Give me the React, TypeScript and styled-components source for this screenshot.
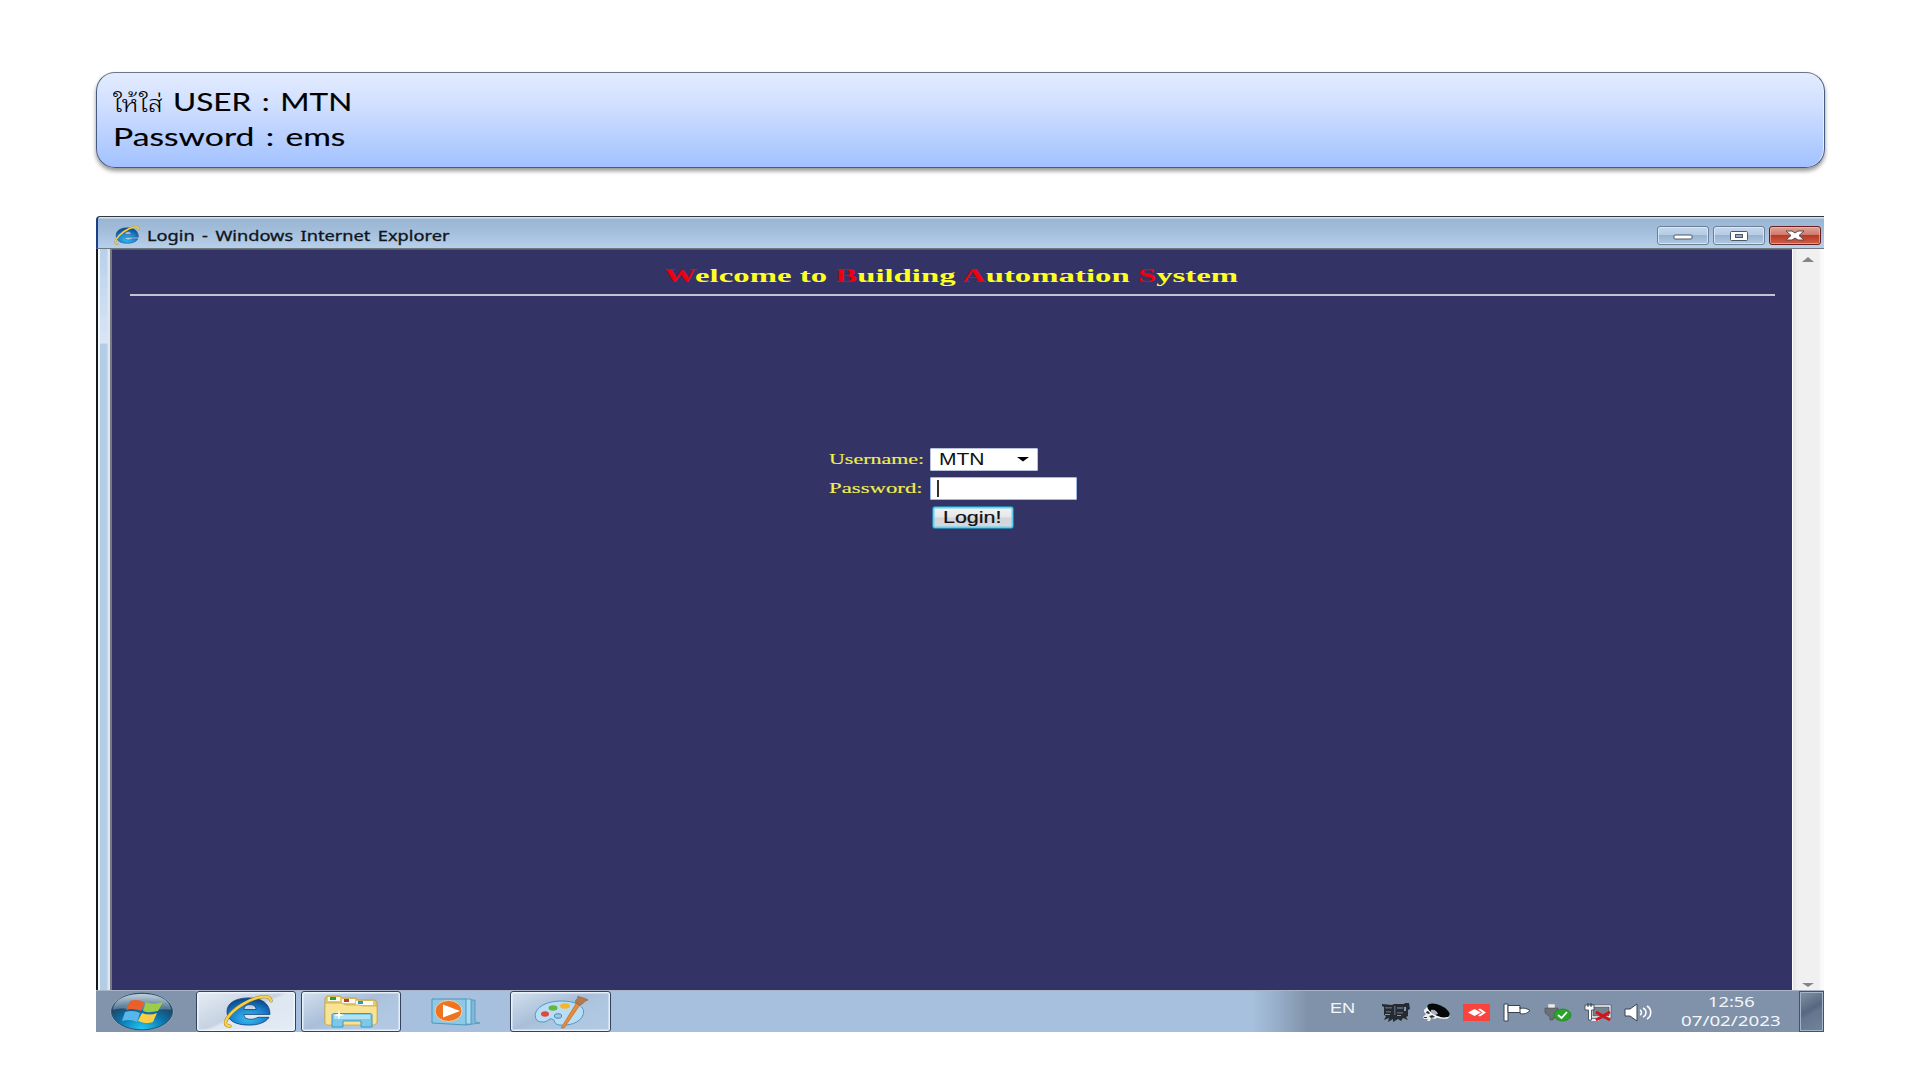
import React, { useLayoutEffect, useRef, useState } from "react";
import styled, { createGlobalStyle } from "styled-components";

const GlobalStyle = createGlobalStyle`
  * {
    box-sizing: border-box;
  }

  body {
    margin: 0;
    background: #ffffff;
    overflow: hidden;
  }

  svg {
    display: block;
    flex: none;
  }
`;

const Slide = styled.main`
  width: 1920px;
  height: 1080px;
  padding: 72px 95px 48px 96px;
  display: flex;
  flex-direction: column;
  gap: 48px;
`;

const FitBox = styled.span<{ $width: number }>`
  display: block;
  flex: none;
  width: ${(p) => p.$width}px;
`;

const FitInner = styled.span`
  display: inline-block;
  vertical-align: top;
  white-space: nowrap;
  transform-origin: 0 50%;
`;

const Banner = styled.section`
  height: 96px;
  padding: 11px 16px 0;
  border: 1px solid #46597f;
  border-top-color: #6c7686;
  border-radius: 19px;
  background: linear-gradient(#e3ecff, #d3e1ff 30%, #a8c5ff 92%, #a3c1ff);
  box-shadow: 0 3px 4px rgba(0, 0, 0, 0.42), inset -1px 0 0 #e6efff;
  font: 25px/35px Lato, "Noto Sans", sans-serif;
  word-spacing: 2px;
  -webkit-text-stroke: 0.15px #000;
  color: #000;
`;

const BannerLine = styled.div`
  height: 35px;
  display: flex;
  gap: 10px;
`;

const Thai = styled.div`
  font: 300 23px/35px "Noto Sans Thai Looped", "Noto Looped Thai", Loma, "Noto Sans Thai",
    "Noto Sans", sans-serif;
  -webkit-text-stroke: 0;
`;

const Desktop = styled.section`
  width: 1728px;
  height: 816px;
  display: flex;
  flex-direction: column;
`;

const TitleBar = styled.header`
  height: 33px;
  padding: 6px 3px 0 16px;
  border-top: 1px solid #33383d;
  border-bottom: 1px solid #6f7880;
  border-left: 2px solid #1b3f87;
  border-top-left-radius: 4px;
  display: flex;
  align-items: center;
  background: linear-gradient(#e3edf7, #9bb6d3 8%, #a3bedb 45%, #b7d0ea);
`;

const TitleText = styled.div`
  margin-left: 7px;
  flex: 1;
  font: 13.5px/20px "Noto Sans", "Open Sans", sans-serif;
  word-spacing: 2px;
  -webkit-text-stroke: 0.3px #10151c;
  color: #10151c;
`;

const WindowButtons = styled.div`
  display: flex;
  gap: 4px;
`;

const WindowButton = styled.button<{ $danger?: boolean }>`
  width: 52px;
  height: 19px;
  padding: 0;
  border: 1px solid ${(p) => (p.$danger ? "#6b1d1d" : "#6b7f98")};
  border-radius: 3px;
  display: flex;
  align-items: center;
  justify-content: center;
  background: ${(p) =>
    p.$danger
      ? "linear-gradient(#dda398, #cf7a6b 46%, #b83a25 50%, #cc5f48)"
      : "linear-gradient(#c5d8ec, #b5cce4 46%, #98b3d0 50%, #b0c9e3)"};
  box-shadow: inset 0 0 0 1px
    ${(p) => (p.$danger ? "rgba(255,190,170,.6)" : "rgba(230,242,255,.7)")};
`;

const WindowBody = styled.div`
  flex: 1;
  display: flex;
`;

const Frame = styled.div`
  width: 16px;
  border-left: 2px solid #15181c;
  border-right: 2px solid #77797c;
  background: linear-gradient(90deg, #f4f9fd 2px, transparent 2px 9px, #dbe7f2 10px),
    linear-gradient(#b9d0ea, #d9e6f5 94px, #b4cde7 95px);
`;

const Page = styled.div`
  flex: 1;
  padding: 16px 17px 0 18px;
  border-top: 1px solid #5a5a70;
  background: #333366;
`;

const Heading = styled.h1`
  margin: 0 0 6px;
  padding-right: 3px;
  height: 22px;
  display: flex;
  justify-content: center;
  font: bold 18px/21px "Liberation Serif", serif;
  color: #ffff22;
`;

const Initial = styled.span`
  color: #ee0011;
`;

const Rule = styled.hr`
  margin: 0;
  height: 2px;
  border: 0;
  background: #c4c3d4;
`;

const Form = styled.form`
  width: 248px;
  margin: 152px auto 0;
  display: flex;
  flex-direction: column;
  gap: 5px;
`;

const Field = styled.div`
  height: 24px;
  display: flex;
`;

const Label = styled.label`
  width: 101px;
  font: 15.5px/22px "Liberation Serif", serif;
  -webkit-text-stroke: 0.15px #f0f04a;
  color: #f0f04a;
`;

const Select = styled.div`
  width: 108px;
  height: 23px;
  padding: 0 8px 0 8px;
  border: 1px solid #b9c2dc;
  border-radius: 1px;
  display: flex;
  align-items: center;
  justify-content: space-between;
  background: #fff;
  font: 16px/22px "Liberation Sans", sans-serif;
  color: #111;
`;

const Input = styled.div`
  width: 147px;
  height: 23px;
  padding: 2px 6px;
  border: 1px solid #9db9e6;
  border-radius: 1px;
  background: #fff;
`;

const Caret = styled.div`
  width: 2px;
  height: 17px;
  background: #333;
`;

const LoginButton = styled.button`
  width: 82px;
  height: 23px;
  margin: 0 0 0 103px;
  padding: 0 0 0 10px;
  border: 1px solid #2a7fa8;
  border-radius: 3px;
  background: linear-gradient(#f4f4f5, #e6e7e9 48%, #d2d4d8 52%, #d6d9dd);
  box-shadow: inset 0 0 0 1.5px #5fd0f3;
  font: 16px/20px "Liberation Sans", sans-serif;
  -webkit-text-stroke: 0.2px #111;
  text-align: left;
  color: #111;
`;

const Scrollbar = styled.div`
  width: 32px;
  padding: 8px 9px 3px 8px;
  border-left: 1px solid #fff;
  display: flex;
  flex-direction: column;
  align-items: center;
  justify-content: space-between;
  background: linear-gradient(90deg, #e3e3e6, #f0f0f0 5px 26px, #fafafa 28px);
`;

const Taskbar = styled.footer`
  height: 42px;
  border-top: 1px solid #a9b4c6;
  display: flex;
  background: linear-gradient(
    90deg,
    #8294ab 100px,
    #a7c0dd 101px 1155px,
    #98afca 1180px,
    #8092a9 1212px
  );
`;

const StartArea = styled.div`
  width: 100px;
  padding: 1px 0 0 14px;
`;

const TaskButton = styled.div<{ $width: number; $bright?: boolean }>`
  width: ${(p) => p.$width}px;
  height: 41px;
  padding-left: ${(p) => (p.$bright ? 3 : 0)}px;
  border: 1px solid #34435b;
  border-radius: 3px;
  display: flex;
  align-items: center;
  justify-content: center;
  background: ${(p) =>
    p.$bright
      ? "linear-gradient(155deg, #e6ecf4, #c6d2e2 48%, #dde6f1 52%, #e4ecf5)"
      : "linear-gradient(155deg, #d4e0ee, #a9bfd9 45%, #aec5e0 60%, #b4cae3)"};
  box-shadow: inset 0 0 0 1.5px rgba(240, 247, 255, 0.85);
`;

const TaskGap = styled.div<{ $width: number }>`
  width: ${(p) => p.$width}px;
  display: flex;
  align-items: center;
  justify-content: center;
`;

const Tray = styled.div`
  margin-left: auto;
  display: flex;
  align-items: center;
`;

const Language = styled.div`
  height: 41px;
  width: 52px;
  padding-top: 7px;
  font: 14.5px/20px "Liberation Sans", sans-serif;
  color: #f2f5f9;
`;

const TrayIcons = styled.div`
  width: 299px;
  padding-top: 1px;
  display: flex;
  gap: 12.4px;
`;

const Clock = styled.div`
  width: 118px;
  height: 41px;
  padding-top: 2px;
  font: 14px/18.5px "Noto Sans", "Open Sans", sans-serif;
  color: #f4f7fa;
`;

const Time = styled.div`
  padding-left: 27px;
`;

const ShowDesktop = styled.div`
  width: 25px;
  height: 41px;
  border: 1px solid #43536a;
  box-shadow: inset 0 0 0 1px #a4b3c6;
  background: linear-gradient(150deg, #8093a8, #56687f 45%, #63768d 55%, #70849c);
`;

interface FitProps {
  width: number;
  children: React.ReactNode;
}

// Stretches a run of text horizontally until it fills the given width
function Fit({ width, children }: FitProps) {
  const ref = useRef<HTMLSpanElement>(null);
  const [scale, setScale] = useState(1);

  useLayoutEffect(() => {
    if (ref.current) setScale(width / ref.current.offsetWidth);
  }, [width]);

  return (
    <FitBox $width={width}>
      <FitInner ref={ref} style={{ transform: `scaleX(${scale})` }}>
        {children}
      </FitInner>
    </FitBox>
  );
}

function IeLogo({ width, height }: { width: number; height: number }) {
  return (
    <svg width={width} height={height} viewBox="0 0 50 34" preserveAspectRatio="none">
      <defs>
        <radialGradient id="ieBlue" cx="50%" cy="75%" r="70%">
          <stop offset="0" stopColor="#35c0f5" />
          <stop offset="0.6" stopColor="#1b7fcb" />
          <stop offset="1" stopColor="#0b4a8e" />
        </radialGradient>
      </defs>
      <path
        fillRule="evenodd"
        fill="url(#ieBlue)"
        stroke="#0d3f78"
        strokeWidth="0.8"
        d="M26 3C39 3 47 9 47 20H21c0 4 3 5 7 5 3 0 5-1 7-2h11c-3 5-10 8-20 8C12 31 4 26 4 17S13 3 26 3ZM21 15h12c0-3-2-5-6-5s-6 2-6 5Z"
      />
      <path
        fill="none"
        stroke="#b98516"
        strokeWidth="3.4"
        strokeLinecap="round"
        d="M7 32C-3 32 5 19 19 10S47-1 48 6"
      />
      <path
        fill="none"
        stroke="#f7d24b"
        strokeWidth="2.3"
        strokeLinecap="round"
        d="M7 32C-3 32 5 19 19 10S47-1 48 6"
      />
    </svg>
  );
}

function StartOrb() {
  return (
    <svg width="64" height="39" viewBox="0 0 64 39">
      <defs>
        <radialGradient id="orb" cx="50%" cy="95%" r="85%">
          <stop offset="0" stopColor="#1fc6f2" />
          <stop offset="0.45" stopColor="#0b77b0" />
          <stop offset="0.8" stopColor="#1d4668" />
          <stop offset="1" stopColor="#4a6b85" />
        </radialGradient>
        <linearGradient id="orbGloss" x1="0" y1="0" x2="0" y2="1">
          <stop offset="0" stopColor="#dce8f0" stopOpacity="0.8" />
          <stop offset="1" stopColor="#a8c0d0" stopOpacity="0.35" />
        </linearGradient>
      </defs>
      <ellipse cx="32" cy="19.5" rx="31.5" ry="19" fill="#9db3c6" />
      <ellipse cx="32" cy="19.5" rx="30.5" ry="18.4" fill="url(#orb)" stroke="#28506e" />
      <path d="M3 18C4 7 16 2 32 2s28 5 29 16c-9-2-17 1-29 0S12 15 3 18Z" fill="url(#orbGloss)" />
      <path d="M20 9c5-2 10-1 14 1l-3 9c-4-2-9-3-15-1Z" fill="#e9602b" />
      <path d="M36 10c5 2 10 2 17 0l-5 9c-5 1-10 2-15 0Z" fill="#9bcc4a" />
      <path d="M15 20c6-2 11-1 15 1l-3 9c-4-2-9-3-15-1Z" fill="#58b7ea" />
      <path d="M32 21c5 2 10 2 15 0l-4 9c-5 2-10 1-15-1Z" fill="#fbce43" />
    </svg>
  );
}

function FolderIcon() {
  return (
    <svg width="56" height="33" viewBox="0 0 56 33">
      <path d="M2 3 4 1h13l2 2h14l2 2h17l2 2v21H2Z" fill="#e5c868" stroke="#b99a45" strokeWidth="0.8" />
      <path d="M5 2h12v4H5ZM19 4h13v4H19ZM33 6h17v4H33Z" fill="#fffdf2" />
      <path d="M7 2h6v3H7Z" fill="#22a637" />
      <path d="M21 4h5v3h-5Z" fill="#c23a2b" />
      <path d="M35 6h5v3h-5Z" fill="#2b93cf" />
      <path d="M2 8h17l4 2h13l4 1h14v17l-3 2H4l-2-2Z" fill="#f8e394" stroke="#c9a94f" strokeWidth="0.8" />
      <path
        d="M9 20c0-1 1-1.500 2-1.500h36c1 0 2 .5 2 1.500v12H38v-6H20v6H9Z"
        fill="#7cc8e8"
        stroke="#3e97c1"
        strokeWidth="1"
      />
      <path d="M11 20h36v4H11Z" fill="#b4e2f5" />
      <path d="m16 15 1 4 5 1-5 1-1 4-1-4-5-1 5-1Z" fill="#fff" />
    </svg>
  );
}

function MediaPlayerIcon() {
  return (
    <svg width="50" height="29" viewBox="0 0 50 29">
      <path d="M35 3h9v22l5 1-14 2Z" fill="#7fb8d8" stroke="#4d96bd" strokeWidth="0.8" />
      <path d="M34 2h6v25h-6Z" fill="#a9dcf1" stroke="#4d96bd" strokeWidth="0.8" />
      <path d="M1 2h34v26L1 26Z" fill="#8cc9e6" stroke="#4d96bd" />
      <ellipse cx="17.500" cy="14" rx="13.500" ry="10.500" fill="#ee7420" stroke="#f7d1b0" strokeWidth="1" />
      <path d="M12 7.500 29 14l-17 6.500Z" fill="#fff" />
    </svg>
  );
}

function PaintIcon() {
  return (
    <svg width="56" height="34" viewBox="0 0 56 34">
      <path
        d="M3 24C-1 14 12 6 28 6s25 6 22 14-14 11-24 10c-6-1-3-5-7-6-3-1-4 3-9 3-4 0-6-1-7-3Z"
        fill="#b9def3"
        stroke="#4c99c4"
      />
      <ellipse cx="12" cy="19" rx="4" ry="2.700" fill="#dc4a3f" />
      <ellipse cx="20" cy="13" rx="4.500" ry="2.800" fill="#67b545" />
      <ellipse cx="32" cy="11" rx="5" ry="2.800" fill="#f5b52d" />
      <ellipse cx="25" cy="21" rx="3.800" ry="2.300" fill="#9ec9e6" stroke="#4a88b5" />
      <path d="m44 7 4 1.500L31 33h-3Z" fill="#e58a3e" stroke="#b86423" strokeWidth="0.6" />
      <path d="M43 8c-2-3 2-3 2-7 2 2 6 1 10 4-3 0-5 5-9 5Z" fill="#b27a50" stroke="#8b5c38" strokeWidth="0.6" />
    </svg>
  );
}

function CameraIcon() {
  return (
    <svg width="28" height="19" viewBox="0 0 28 19">
      <path
        d="M0 1l10 1 2-1h10l1-1h4l1 6-2 1v6l-2 1 2 3-5-2-2 3-3-2-5 3v-3l-5 3 1-4-5 2 2-4-2-1V4L0 3Z"
        fill="#262b33"
      />
      <path d="M3 4h7v1.500H3ZM12 3h1.500v9H12ZM15 4h6v2h-6ZM4 8h5v1.500H4ZM15 9h6v1.500h-6Z" fill="#566170" />
      <path d="M3 11h5v1H3ZM15 12h4v1h-4ZM22 4h2v4h-2Z" fill="#8793a2" />
    </svg>
  );
}

function DishIcon() {
  return (
    <svg width="28" height="19" viewBox="0 0 28 19">
      <path d="M2 7 5 4l6 5 7 4-5 3-4-1-1 3H5l1-2H2l-1-2 3-3-2-2Z" fill="#eceeef" />
      <path d="m5 8 4 1-2 2-3-1ZM7 13l4-1 2 2-4 1ZM2 14h3v1H2Z" fill="#2c323a" />
      <ellipse cx="16.500" cy="8.500" rx="12" ry="6" transform="rotate(24 16.500 8.500)" fill="#fff" />
      <ellipse cx="16.500" cy="7.500" rx="12" ry="5.500" transform="rotate(24 16.500 7.500)" fill="#060709" />
      <path d="M9 7c3-1 6 1 7 4l-3 1-4-2Z" fill="#aeb4bb" />
    </svg>
  );
}

function AnyDeskIcon() {
  return (
    <svg width="28" height="19" viewBox="0 0 28 19">
      <path d="M0 1h27v17H0Z" fill="#f8443c" />
      <path d="m5 9.500 6.500-3.500 6.500 3.500-6.500 3.500Z" fill="#fff" />
      <path d="m15 6.500 2-1 6 4-6 4-2-1 4.500-3Z" fill="#fff" />
    </svg>
  );
}

function FlagIcon() {
  return (
    <svg width="28" height="19" viewBox="0 0 28 19">
      <path d="M1 1h4v17H1Z" fill="#fff" stroke="#39434f" />
      <path d="M5 2.500h12v3c4-1 7 0 10 2-3 3-6 4-10 3v-1H5Z" fill="#fff" stroke="#39434f" />
      <path d="M17 4v6" stroke="#39434f" />
    </svg>
  );
}

function UsbIcon() {
  return (
    <svg width="28" height="19" viewBox="0 0 28 19">
      <path d="M4 1h7v5H4Z" fill="#e9ecef" stroke="#949ca6" strokeWidth="0.6" />
      <path d="M1 5h13v6l-3 4H9v2H6v-3L1 10Z" fill="#6b7077" stroke="#484e56" strokeWidth="0.6" />
      <ellipse cx="18.500" cy="12" rx="8.500" ry="6" fill="#28a528" stroke="#187818" strokeWidth="0.6" />
      <path d="m14 12 3.500 3L23 9" fill="none" stroke="#fff" strokeWidth="1.800" />
    </svg>
  );
}

function NetworkIcon() {
  return (
    <svg width="28" height="19" viewBox="0 0 28 19">
      <path d="M8 3h18v11H8Z" fill="#77828f" stroke="#39434f" strokeWidth="2.600" />
      <path d="M8 3h18v11H8Z" fill="none" stroke="#fff" strokeWidth="1.300" />
      <path d="M7 17h8" stroke="#fff" strokeWidth="1.600" />
      <path d="M1 2h9v5H7.500v10h-3V7H1Z" fill="#fff" stroke="#333c47" strokeWidth="0.8" />
      <path d="M4 0v4M7 0v4" stroke="#333c47" />
      <path d="m12 9 14 8M26 9l-14 8" stroke="#d3131c" strokeWidth="2.800" />
    </svg>
  );
}

function VolumeIcon() {
  return (
    <svg width="28" height="19" viewBox="0 0 28 19">
      <path d="M1 6h5l7-5v17l-7-5H1Z" fill="#fff" stroke="#39434f" />
      <path d="M16 7c2 1 2 4 0 5M19 5c4 2 4 7 0 9M23 3c5 3 5 10 0 13" fill="none" stroke="#fff" strokeWidth="1.500" />
    </svg>
  );
}

function TitleBarRow() {
  return (
    <TitleBar>
      <IeLogo width={26} height={19} />
      <TitleText>
        <Fit width={302}>Login - Windows Internet Explorer</Fit>
      </TitleText>
      <WindowButtons>
        <WindowButton aria-label="Minimize">
          <svg width="20" height="9" viewBox="0 0 20 9">
            <rect x="1" y="4" width="18" height="4" rx="1" fill="#fff" stroke="#4b5868" />
          </svg>
        </WindowButton>
        <WindowButton aria-label="Maximize">
          <svg width="18" height="10" viewBox="0 0 18 10">
            <rect x="0.500" y="0.500" width="17" height="9" rx="1" fill="#fff" stroke="#4b5868" />
            <rect x="5.500" y="3.500" width="7" height="3" fill="#93abc6" stroke="#4b5868" />
          </svg>
        </WindowButton>
        <WindowButton $danger aria-label="Close">
          <svg width="20" height="11" viewBox="0 0 20 11">
            <path
              d="M1 1h6l3 2 3-2h6l-5 4.500 5 4.500h-6l-3-2-3 2H1l5-4.500Z"
              fill="#fff"
              stroke="#5c4848"
            />
          </svg>
        </WindowButton>
      </WindowButtons>
    </TitleBar>
  );
}

function LoginForm() {
  return (
    <Form>
      <Field>
        <Label>
          <Fit width={95}>Username:</Fit>
        </Label>
        <Select>
          <Fit width={46}>MTN</Fit>
          <svg width="12" height="5" viewBox="0 0 12 5">
            <path d="M0 0h12L6 4.500Z" fill="#000" />
          </svg>
        </Select>
      </Field>
      <Field>
        <Label>
          <Fit width={94}>Password:</Fit>
        </Label>
        <Input>
          <Caret />
        </Input>
      </Field>
      <LoginButton type="button">
        <Fit width={59}>Login!</Fit>
      </LoginButton>
    </Form>
  );
}

export default function App() {
  return (
    <>
      <GlobalStyle />
      <Slide>
        <Banner>
          <BannerLine>
            <Thai>
              <Fit width={50}>ให้ใส่</Fit>
            </Thai>
            <Fit width={179}>USER : MTN</Fit>
          </BannerLine>
          <BannerLine>
            <Fit width={233}>Password : ems</Fit>
          </BannerLine>
        </Banner>

        <Desktop>
          <TitleBarRow />
          <WindowBody>
            <Frame />
            <Page>
              <Heading>
                <Fit width={574}>
                  <Initial>W</Initial>elcome to <Initial>B</Initial>uilding <Initial>A</Initial>
                  utomation <Initial>S</Initial>ystem
                </Fit>
              </Heading>
              <Rule />
              <LoginForm />
            </Page>
            <Scrollbar>
              <svg width="12" height="5" viewBox="0 0 12 5">
                <path d="M0 5h12L6 0Z" fill="#858585" />
              </svg>
              <svg width="12" height="4" viewBox="0 0 12 4">
                <path d="M0 0h12L6 4Z" fill="#858585" />
              </svg>
            </Scrollbar>
          </WindowBody>

          <Taskbar>
            <StartArea>
              <StartOrb />
            </StartArea>
            <TaskButton $width={100} $bright>
              <IeLogo width={50} height={33} />
            </TaskButton>
            <TaskGap $width={5} />
            <TaskButton $width={100}>
              <FolderIcon />
            </TaskButton>
            <TaskGap $width={109}>
              <MediaPlayerIcon />
            </TaskGap>
            <TaskButton $width={101}>
              <PaintIcon />
            </TaskButton>

            <Tray>
              <Language>
                <Fit width={25}>EN</Fit>
              </Language>
              <TrayIcons>
                <CameraIcon />
                <DishIcon />
                <AnyDeskIcon />
                <FlagIcon />
                <UsbIcon />
                <NetworkIcon />
                <VolumeIcon />
              </TrayIcons>
              <Clock>
                <Time>
                  <Fit width={47}>12:56</Fit>
                </Time>
                <Fit width={99}>07/02/2023</Fit>
              </Clock>
              <ShowDesktop />
            </Tray>
          </Taskbar>
        </Desktop>
      </Slide>
    </>
  );
}
